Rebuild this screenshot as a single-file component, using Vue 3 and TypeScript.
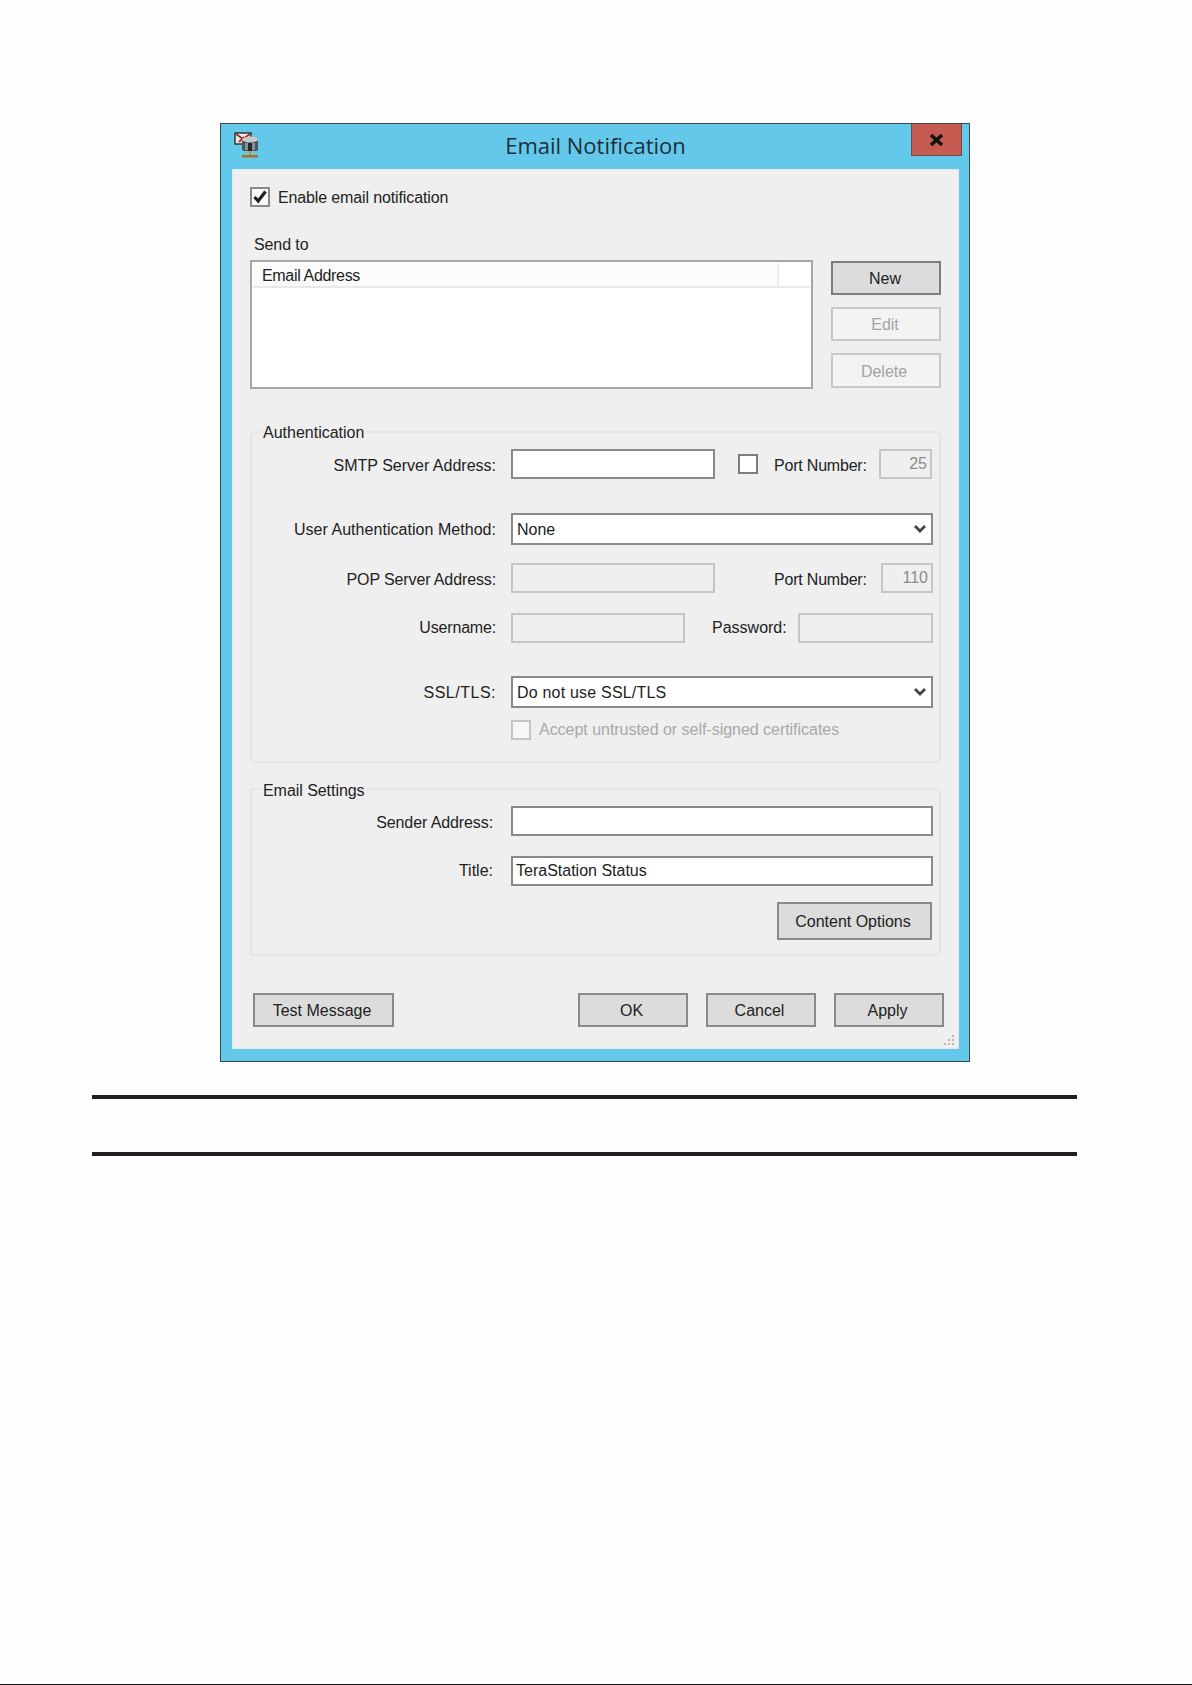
<script setup lang="ts">
const gripDots: [number, number][] = [
  [8, 0], [8, 4], [4, 4], [8, 8], [4, 8], [0, 8],
]
</script>

<template>
  <main class="page">
    <section class="window">
      <header class="titlebar">
        <svg class="app-icon" width="30" height="28" viewBox="0 0 30 28">
          <rect x="1" y="1" width="16" height="11" fill="#efece8" stroke="#2f2c2b" stroke-width="1.4" />
          <path d="M2 2 L9 7 L16 2" fill="none" stroke="#8c2a2a" stroke-width="1.6" />
          <path d="M5 10 L10 5" stroke="#b8302c" stroke-width="2" />
          <rect x="8" y="7" width="16" height="12" rx="2" fill="#4c5458" />
          <ellipse cx="16" cy="7.5" rx="8" ry="3" fill="#c4c9cc" />
          <path d="M11 11 H14 V18 H11 Z M18 11 H21 V18 H18 Z" fill="#8b9296" />
          <path d="M14 11 H18 V19 H14 Z" fill="#23282b" />
          <rect x="15" y="19" width="2" height="4" fill="#e08a1e" />
          <rect x="8" y="23" width="16" height="2.5" fill="#a8701c" />
        </svg>
        <h1 class="title">Email Notification</h1>
        <button class="close" type="button" aria-label="Close">
          <svg width="15" height="12" viewBox="0 0 15 12">
            <path d="M2 1 L13 11 M13 1 L2 11" stroke="#111" stroke-width="3.4" fill="none" />
          </svg>
        </button>
      </header>

      <div class="client">
        <label class="enable">
          <span class="check strong">
            <svg width="16" height="16" viewBox="0 0 16 16">
              <path d="M2.5 8 L6.2 12 L13.5 2.5" fill="none" stroke="#222" stroke-width="3.2" />
            </svg>
          </span>
          <span class="enable-text">Enable email notification</span>
        </label>

        <div class="sendto-label">Send to</div>
        <div class="sendto">
          <div class="list">
            <div class="list-head">
              <div class="col">Email Address</div>
            </div>
          </div>
          <div class="side">
            <button class="btn default side-btn" type="button">New</button>
            <button class="btn off side-btn" type="button">Edit</button>
            <button class="btn off side-btn delete" type="button">Delete</button>
          </div>
        </div>

        <fieldset class="group auth">
          <legend>Authentication</legend>
          <div class="row r-smtp">
            <span class="lbl">SMTP Server Address:</span>
            <div class="field w204"></div>
            <span class="check solo"></span>
            <span class="port-lbl">Port Number:</span>
            <div class="field off num port1">25</div>
          </div>
          <div class="row r-user">
            <span class="lbl">User Authentication Method:</span>
            <div class="field select">
              <span>None</span>
              <svg width="14" height="10" viewBox="0 0 14 10"><path d="M2 2 L7 7 L12 2" fill="none" stroke="#444" stroke-width="2.8" /></svg>
            </div>
          </div>
          <div class="row r-pop">
            <span class="lbl">POP Server Address:</span>
            <div class="field off w204"></div>
            <span class="port-lbl pop">Port Number:</span>
            <div class="field off num port2">110</div>
          </div>
          <div class="row r-name">
            <span class="lbl">Username:</span>
            <div class="field off w174"></div>
            <span class="pw-lbl">Password:</span>
            <div class="field off grow"></div>
          </div>
          <div class="row r-ssl">
            <span class="lbl">SSL/TLS:</span>
            <div class="field select">
              <span>Do not use SSL/TLS</span>
              <svg width="14" height="10" viewBox="0 0 14 10"><path d="M2 2 L7 7 L12 2" fill="none" stroke="#444" stroke-width="2.8" /></svg>
            </div>
          </div>
          <div class="row r-accept">
            <span class="check muted"></span>
            <span class="accept">Accept untrusted or self-signed certificates</span>
          </div>
        </fieldset>

        <fieldset class="group settings">
          <legend>Email Settings</legend>
          <div class="row r-sender">
            <span class="lbl narrow">Sender Address:</span>
            <div class="field grow"></div>
          </div>
          <div class="row r-title">
            <span class="lbl narrow">Title:</span>
            <div class="field grow text-field">TeraStation Status</div>
          </div>
          <div class="row r-content">
            <button class="btn content" type="button">Content Options</button>
          </div>
        </fieldset>

        <div class="actions">
          <button class="btn test" type="button">Test Message</button>
          <div class="actions-right">
            <button class="btn action" type="button">OK</button>
            <button class="btn action" type="button">Cancel</button>
            <button class="btn action" type="button">Apply</button>
          </div>
        </div>

        <svg class="grip" width="12" height="12" viewBox="0 0 12 12">
          <rect v-for="(d, i) in gripDots" :key="i" :x="d[0]" :y="d[1]" width="2" height="2" fill="#b4b8ba" />
        </svg>
      </div>
    </section>

    <div class="rules"></div>
    <div class="page-edge"></div>
  </main>
</template>

<style>
html, body { margin: 0; background: #fefefe; }
</style>

<style scoped>
.page {
  width: 1192px;
  height: 1685px;
  padding-top: 123px;
  box-sizing: border-box;
  background: #fefefe;
  font-family: "Liberation Sans", Arial, sans-serif;
  font-size: 16px;
  color: #222;
  overflow: hidden;
  display: flex;
  flex-direction: column;
}
.window {
  width: 750px;
  height: 939px;
  flex: none;
  margin-left: 220px;
  box-sizing: border-box;
  border: 1px solid #37474f;
  background: #64c8ea;
  padding: 0 10px 12px 11px;
  display: flex;
  flex-direction: column;
}
.titlebar {
  height: 45px;
  flex: none;
  display: flex;
  align-items: flex-start;
  position: relative;
}
.app-icon { position: absolute; left: 2px; top: 8px; }
.title {
  margin: 7px 0 0;
  width: 100%;
  text-align: center;
  font-size: 22px;
  font-weight: 400;
  font-family: "Open Sans", sans-serif;
  color: #1d2f3a;
  line-height: 28px;
}
.close {
  position: absolute;
  right: -3px;
  top: 0;
  width: 51px;
  height: 32px;
  box-sizing: border-box;
  padding: 0;
  border: 1px solid #6d4a48;
  border-top: 0;
  background: #c45a50;
  display: flex;
  align-items: center;
  justify-content: center;
}
.client {
  flex: 1;
  position: relative;
  background: #efefef;
  padding: 18px 18px 0 18px;
  display: flex;
  flex-direction: column;
  box-shadow: inset 0 0 0 1px #e2eaee;
}
.enable {
  display: flex;
  align-items: center;
  height: 20px;
  gap: 8px;
}
.enable-text { padding-top: 2px; letter-spacing: -0.13px; }
.check {
  width: 20px;
  height: 20px;
  box-sizing: border-box;
  background: #fff;
  border: 2px solid #8a8a8a;
  flex: none;
  display: flex;
  align-items: center;
  justify-content: center;
}
.check.strong { background: #fbfbfb; }
.check.solo { border-color: #7d7d7d; margin-left: 23px; }
.check.muted { border-color: #c4c4c4; background: #f6f6f6; }
.sendto-label {
  margin: 28px 0 0 4px;
  padding-top: 1px;
  line-height: 17px;
  height: 17px;
  letter-spacing: -0.1px;
}
.sendto {
  margin-top: 7px;
  display: flex;
  align-items: flex-start;
}
.list {
  width: 563px;
  height: 129px;
  box-sizing: border-box;
  border: 2px solid #a0a6aa;
  background: #fff;
  padding: 1px;
}
.list-head {
  height: 25px;
  box-sizing: border-box;
  border-bottom: 2px solid #e9e9e9;
}
.col {
  width: 526px;
  height: 23px;
  box-sizing: border-box;
  padding: 2px 0 0 9px;
  background: #fbfbfb;
  border-right: 2px solid #ededed;
  line-height: 22px;
  letter-spacing: -0.33px;
}
.side {
  margin-left: 18px;
  display: flex;
  flex-direction: column;
  gap: 12px;
  padding-top: 1px;
}
.btn {
  box-sizing: border-box;
  padding: 2px 0 0;
  border: 2px solid #8a8a8a;
  background: #dcdcdc;
  font: inherit;
  color: #222;
  text-align: center;
}
.btn.default { border-color: #7c7c7c; }
.btn.off {
  border-color: #c6c8c9;
  background: #f3f3f3;
  color: #a3a3a3;
}
.side-btn { width: 110px; height: 34px; padding-right: 2px; }
.side-btn.delete { height: 35px; padding-right: 4px; }
.group {
  margin: 0;
  padding: 0;
  min-width: 0;
  position: relative;
  border: 2px solid #dfe7ec;
  border-radius: 4px;
  display: block;
  width: 691px;
  box-sizing: border-box;
}
.group legend {
  margin-left: 9px;
  padding: 2px 2px 0;
  line-height: 16px;
  font-size: 16px;
}
.auth { margin-top: 34px; height: 340px; }
.settings { margin-top: 17px; height: 176px; }
.settings legend { padding-top: 4px; line-height: 14px; letter-spacing: -0.05px; }
.row {
  display: flex;
  align-items: center;
  padding-right: 6px;
}
.lbl {
  width: 244px;
  flex: none;
  text-align: right;
  white-space: nowrap;
}
.lbl.narrow { width: 241px; margin-right: 18px; }
.lbl:not(.narrow) { margin-right: 15px; }
.field {
  height: 30px;
  box-sizing: border-box;
  border: 2px solid #8a8a8a;
  background: #fff;
  flex: none;
  line-height: 26px;
}
.field.off { border-color: #c4c6c7; background: #efefef; color: #8b8b8b; }
.w204 { width: 204px; }
.w174 { width: 174px; }
.grow { flex: 1; }
.num { text-align: right; padding-right: 3px; }
.port1 { width: 53px; margin-left: 13px; margin-right: 1px; }
.port2 { width: 52px; margin-left: 15px; }
.port-lbl { margin-left: 16px; width: 92px; white-space: nowrap; letter-spacing: -0.2px; padding-top: 3px; }
.port-lbl.pop { margin-left: 59px; width: 92px; }
.pw-lbl { width: 74px; margin-left: 27px; margin-right: 12px; white-space: nowrap; }
.select {
  flex: 1;
  height: 32px;
  padding: 0 4px 0 4px;
  display: flex;
  align-items: center;
  justify-content: space-between;
  line-height: 1;
}
.select span { padding-top: 2px; }
.r-smtp { margin-top: 8px; }
.r-smtp .lbl { padding-top: 3px; }
.r-user { margin-top: 34px; }
.r-user .lbl { padding-top: 2px; letter-spacing: 0.04px; }
.r-pop { margin-top: 18px; }
.r-pop .lbl { padding-top: 3px; letter-spacing: -0.12px; }
.r-name { margin-top: 20px; }
.r-name .lbl { letter-spacing: -0.18px; }
.r-ssl { margin-top: 33px; }
.r-ssl .lbl { letter-spacing: 0.5px; padding-top: 1px; }
.r-ssl .select span { letter-spacing: 0.2px; padding-top: 1px; }
.r-accept { margin-top: 12px; padding-left: 259px; gap: 8px; }
.accept { color: #a8a8a8; white-space: nowrap; letter-spacing: -0.03px; }
.r-sender { margin-top: 8px; }
.r-sender .lbl { padding-top: 4px; letter-spacing: -0.1px; }
.r-title { margin-top: 20px; }
.text-field { padding-left: 3px; }
.r-content { margin-top: 16px; justify-content: flex-end; padding-right: 7px; }
.btn.content { width: 155px; height: 38px; letter-spacing: -0.02px; padding-right: 3px; }
.actions {
  margin-top: 37px;
  display: flex;
  justify-content: space-between;
  padding: 0 0 0 3px;
  width: 691px;
}
.btn.test { width: 141px; height: 34px; padding-right: 3px; }
.actions-right { display: flex; gap: 18px; }
.btn.action { width: 110px; height: 34px; padding-right: 3px; }
.grip { position: absolute; right: 3px; bottom: 2px; }
.rules {
  flex: none;
  margin: 33px 0 0 92px;
  width: 985px;
  height: 61px;
  box-sizing: border-box;
  border-top: 4px solid #231f20;
  border-bottom: 4px solid #231f20;
}
.page-edge {
  margin-top: auto;
  flex: none;
  height: 1px;
  background: #111;
}
</style>
